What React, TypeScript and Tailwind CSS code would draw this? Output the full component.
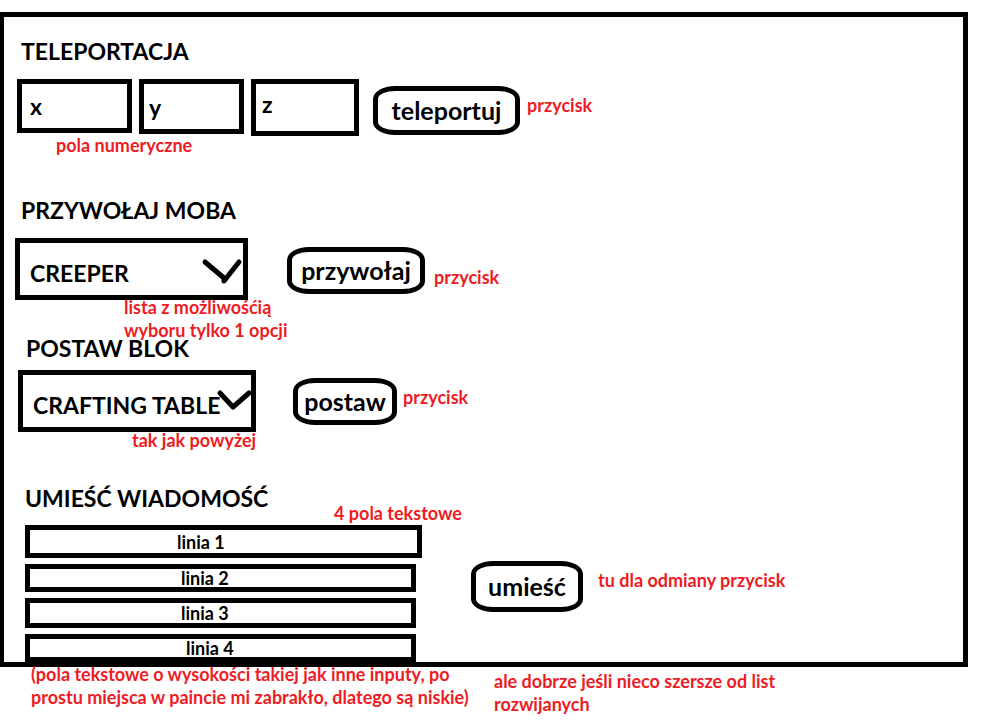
import type { ReactNode } from 'react';

function Heading({ className = '', children }: { className?: string; children: ReactNode }) {
  return <h2 className={`text-[23px] leading-8 font-bold whitespace-nowrap ${className}`}>{children}</h2>;
}

function Note({ className = '', children }: { className?: string; children: ReactNode }) {
  return <p className={`text-lg leading-[23px] font-bold text-[#ed1c24] ${className}`}>{children}</p>;
}

function ActionButton({ className, children }: { className: string; children: ReactNode }) {
  return (
    <button
      type="button"
      className={`shrink-0 cursor-pointer rounded-[22px/13px] border-5 border-black bg-white pb-0.5 text-[25px] leading-8 font-bold ${className}`}
    >
      {children}
    </button>
  );
}

function NumberField({ name, className }: { name: string; className: string }) {
  return (
    <input
      type="number"
      aria-label={name}
      placeholder={name}
      className={`border-5 border-black bg-white text-[23px] font-bold outline-none placeholder:text-black placeholder:opacity-100 ${className}`}
    />
  );
}

function Dropdown({
  label,
  options,
  className,
  arrow,
  children,
}: {
  label: string;
  options: string[];
  className: string;
  arrow: string;
  children: ReactNode;
}) {
  return (
    <div className={`relative shrink-0 ${className}`}>
      <select
        aria-label={label}
        className="h-[62px] w-full appearance-none border-5 border-black bg-white pt-2 pl-[10px] text-[23px] font-bold outline-none"
      >
        {options.map((o) => (
          <option key={o}>{o}</option>
        ))}
      </select>
      <svg
        className="pointer-events-none absolute top-5 right-[5px] h-7 w-[42px] overflow-visible"
        viewBox="0 0 42 28"
        fill="none"
        stroke="black"
        strokeWidth="5"
        strokeLinecap="round"
        strokeLinejoin="round"
        aria-hidden="true"
      >
        <path d={arrow} />
      </svg>
      {children}
    </div>
  );
}

const lines = [
  { label: 'linia 1', className: 'h-[33px] w-[397px] pl-[147px]' },
  { label: 'linia 2', className: 'h-[28px] w-[391px] pl-[151px]' },
  { label: 'linia 3', className: 'h-[30px] w-[391px] pl-[151px]' },
  { label: 'linia 4', className: 'h-[28px] w-[391px] pl-[156px]' },
];

export default function App() {
  return (
    <div className="min-h-screen bg-white pt-3 font-['Lato','Noto_Sans',sans-serif] text-black">
      <main className="mr-[38px] border-5 border-l-4 border-black pt-[18px]">
        <section className="pl-[13px]">
          <Heading className="pl-1">TELEPORTACJA</Heading>
          <div className="mt-3 flex items-start">
            <div className="relative flex items-start gap-[7px]">
              <NumberField name="x" className="h-[54px] w-[115px] pl-2" />
              <NumberField name="y" className="h-[55px] w-[105px] pl-[5px]" />
              <NumberField name="z" className="h-[57px] w-[108px] pb-[7px] pl-[6px]" />
              <Note className="absolute top-[55px] left-[39px] whitespace-nowrap">pola numeryczne</Note>
            </div>
            <ActionButton className="mt-[7px] ml-[14px] h-[49px] w-[147px]">teleportuj</ActionButton>
            <Note className="mt-[15px] ml-[7px]">przycisk</Note>
          </div>
        </section>

        <section className="mt-[58px] pl-[11px]">
          <Heading className="pl-[6px]">PRZYWOŁAJ MOBA</Heading>
          <div className="mt-3 flex items-start">
            <Dropdown
              label="Przywołaj moba"
              options={['CREEPER', 'ZOMBIE', 'SKELETON']}
              className="w-[233px]"
              arrow="M4 4 L23 20 V23 L38 4"
            >
              <Note className="absolute top-[58px] left-[109px] whitespace-nowrap">
                lista z możliwośćią
                <br />
                wyboru tylko 1 opcji
              </Note>
            </Dropdown>
            <ActionButton className="mt-[9px] ml-[39px] h-[47px] w-[138px]">przywołaj</ActionButton>
            <Note className="mt-7 ml-[9px]">przycisk</Note>
          </div>
        </section>

        <section className="mt-8 pl-[14px]">
          <Heading className="pl-2">POSTAW BLOK</Heading>
          <div className="mt-[6px] flex items-start">
            <Dropdown
              label="Postaw blok"
              options={['CRAFTING TABLE', 'FURNACE', 'CHEST']}
              className="w-[238px]"
              arrow="M11 3 L24 17 L40 3"
            >
              <Note className="absolute top-[59px] left-[114px] whitespace-nowrap">tak jak powyżej</Note>
            </Dropdown>
            <ActionButton className="mt-2 ml-[37px] h-[47px] w-[104px]">postaw</ActionButton>
            <Note className="mt-4 ml-[6px]">przycisk</Note>
          </div>
        </section>

        <section className="mt-[50px] pl-[21px]">
          <div className="flex h-[43px] items-end">
            <Heading className="w-[309px] self-start">UMIEŚĆ WIADOMOŚĆ</Heading>
            <Note>4 pola tekstowe</Note>
          </div>
          <div className="flex items-start">
            <div className="flex w-[397px] shrink-0 flex-col gap-[6px]">
              {lines.map((l) => (
                <input
                  key={l.label}
                  type="text"
                  aria-label={l.label}
                  placeholder={l.label}
                  className={`border-5 border-black bg-white text-lg leading-[18px] font-bold outline-none placeholder:text-black placeholder:opacity-100 ${l.className}`}
                />
              ))}
            </div>
            <ActionButton className="mt-9 ml-[49px] h-[51px] w-[112px]">umieść</ActionButton>
            <Note className="mt-11 ml-[15px]">tu dla odmiany przycisk</Note>
          </div>
        </section>
      </main>

      <footer className="-mt-1 flex items-start pl-[31px]">
        <Note className="w-[463px] shrink-0">
          (pola tekstowe o wysokości takiej jak inne inputy, po
          <br />
          prostu miejsca w paincie mi zabrakło, dlatego są niskie)
        </Note>
        <Note className="mt-[7px]">
          ale dobrze jeśli nieco szersze od list
          <br />
          rozwijanych
        </Note>
      </footer>
    </div>
  );
}
